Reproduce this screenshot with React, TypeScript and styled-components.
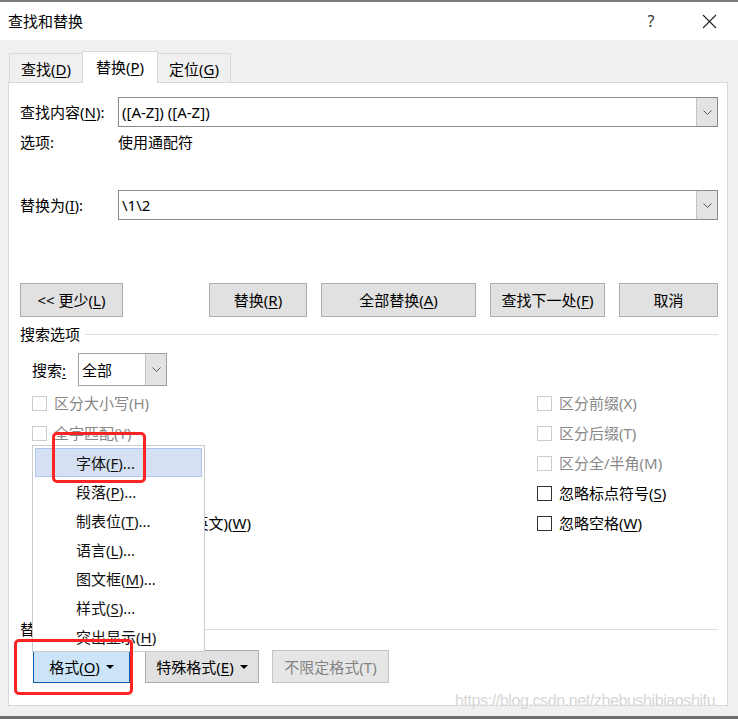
import React from 'react';
import styled, { createGlobalStyle } from 'styled-components';

const GlobalStyle = createGlobalStyle`
  html, body {
    margin: 0;
    padding: 0;
    background: #f0f0f0;
  }
  * {
    box-sizing: border-box;
  }
`;

const FONT = `"Noto Sans", "Noto Sans CJK SC", sans-serif`;

const Window = styled.div`
  position: relative;
  width: 738px;
  height: 719px;
  display: flex;
  flex-direction: column;
  background-color: #f0f0f0;
  border-top: 2px solid #7b7b7b;
  border-bottom: 3px solid #6e6e6e;
  font-family: ${FONT};
  font-size: 15px;
  color: #000;
  overflow: hidden;
`;

const TitleBar = styled.div`
  height: 38px;
  display: flex;
  align-items: center;
  background-color: #fff;
  padding-left: 8px;
`;

const Title = styled.div`
  flex: 1;
  font-size: 15px;
  line-height: 20px;
`;

const TitleButton = styled.div`
  width: 58px;
  height: 38px;
  display: flex;
  align-items: center;
  justify-content: center;
  color: #333;
  font-size: 16px;
`;

const Body = styled.div`
  flex: 1;
  display: flex;
  flex-direction: column;
  padding: 11px 10px 10px 8px;
`;

const TabStrip = styled.div`
  display: flex;
  align-items: flex-end;
  padding-left: 1px;
  margin-bottom: -1px;
  position: relative;
  z-index: 1;
`;

const Tab = styled.div<{ $active?: boolean }>`
  height: ${p => (p.$active ? '32px' : '30px')};
  padding: 0 ${p => (p.$active ? '13px' : '11px')};
  display: flex;
  align-items: center;
  background-color: ${p => (p.$active ? '#fff' : '#f0f0f0')};
  border: 1px solid #d9d9d9;
  border-bottom: ${p => (p.$active ? '1px solid #fff' : '1px solid #d9d9d9')};
  margin-right: -1px;
  line-height: 18px;
  padding-top: ${p => (p.$active ? '0' : '2px')};
`;

const Panel = styled.div`
  flex: 1;
  display: flex;
  flex-direction: column;
  background-color: #fff;
  border: 1px solid #d9d9d9;
  padding: 14px 9px 0 11px;
`;

const FieldRow = styled.div<{ $gap?: number }>`
  display: flex;
  align-items: center;
  height: 30px;
  margin-top: ${p => p.$gap ?? 0}px;
`;

const FieldLabel = styled.div`
  width: 98px;
  line-height: 18px;
`;

const Combo = styled.div`
  flex: 1;
  height: 30px;
  display: flex;
  border: 1px solid #8a8a8a;
  background: #fff;
`;

const ComboText = styled.div`
  flex: 1;
  display: flex;
  align-items: center;
  padding-left: 3px;
  font-size: 15px;
  line-height: 18px;
`;

const ComboArrow = styled.div<{ $w?: number }>`
  width: ${p => p.$w ?? 21}px;
  display: flex;
  align-items: center;
  justify-content: center;
  background-color: #e3e3e3;
  border-left: 1px solid #c4c4c4;
`;

const InfoRow = styled.div`
  display: flex;
  align-items: center;
  height: 30px;
  line-height: 18px;
`;

const ButtonRow = styled.div<{ $gap: number; $indent?: number }>`
  display: flex;
  align-items: center;
  margin-top: ${p => p.$gap}px;
  padding-left: ${p => p.$indent ?? 0}px;
`;

const PushButton = styled.div<{ $w: number; $h?: number; $ml?: number; $state?: 'normal' | 'focus' | 'disabled' }>`
  width: ${p => p.$w}px;
  height: ${p => p.$h ?? 34}px;
  margin-left: ${p => (p.$ml === undefined ? '0' : p.$ml < 0 ? 'auto' : `${p.$ml}px`)};
  display: flex;
  align-items: center;
  justify-content: center;
  gap: 6px;
  line-height: 18px;
  white-space: pre;
  background-color: ${p =>
    p.$state === 'focus' ? '#cce4f7' : p.$state === 'disabled' ? '#e6e6e6' : '#e1e1e1'};
  border: 1px solid
    ${p => (p.$state === 'focus' ? '#0a5fa8' : p.$state === 'disabled' ? '#c4c4c4' : '#adadad')};
  color: ${p => (p.$state === 'disabled' ? '#838383' : '#000')};
`;

const GroupHeader = styled.div<{ $gap: number }>`
  display: flex;
  align-items: center;
  gap: 5px;
  height: 18px;
  margin-top: ${p => p.$gap}px;
  line-height: 18px;

  &::after {
    content: '';
    flex: 1;
    height: 1px;
    background-color: #dcdcdc;
  }
`;

const SearchRow = styled.div`
  display: flex;
  align-items: center;
  height: 33px;
  margin-top: 10px;
  padding-left: 12px;
`;

const SearchLabel = styled.div`
  width: 46px;
  line-height: 18px;
`;

const SmallCombo = styled.div`
  width: 89px;
  height: 33px;
  display: flex;
  border: 1px solid #a0a0a0;
`;

const CheckGrid = styled.div`
  display: grid;
  grid-template-columns: 505px 1fr;
  grid-auto-rows: 30px;
  margin-top: 2px;
  padding-left: 12px;
`;

const CheckItem = styled.div<{ $disabled?: boolean }>`
  display: flex;
  align-items: center;
  gap: 7px;
  line-height: 18px;
  white-space: nowrap;
  color: ${p => (p.$disabled ? '#888' : '#000')};
`;

const Box = styled.div<{ $disabled?: boolean }>`
  width: 15px;
  height: 15px;
  border: 1px solid ${p => (p.$disabled ? '#cccccc' : '#333')};
  background: #fff;
  display: flex;
  align-items: center;
  justify-content: center;
`;

const Key = styled.span`
  text-decoration: underline;
  text-underline-offset: 2px;
  text-decoration-thickness: 1px;
`;

const Caret = styled.span`
  width: 0;
  height: 0;
  border-left: 4px solid transparent;
  border-right: 4px solid transparent;
  border-top: 4px solid #000;
`;

const Menu = styled.div`
  position: absolute;
  left: 32px;
  top: 443px;
  width: 173px;
  height: 207px;
  background: #fff;
  border: 1px solid #cccccc;
  padding: 2px 2px 0;
  z-index: 5;
`;

const MenuItem = styled.div<{ $hot?: boolean }>`
  height: 29px;
  display: flex;
  align-items: center;
  padding-left: 40px;
  line-height: 18px;
  color: #111;
  background-color: ${p => (p.$hot ? '#d5e1f2' : 'transparent')};
  border: 1px solid ${p => (p.$hot ? '#aec4e8' : 'transparent')};
`;

const Annotation = styled.div`
  position: absolute;
  border: 3px solid #ff2424;
  border-radius: 5px;
  z-index: 6;
`;

const Watermark = styled.div`
  position: absolute;
  left: 455px;
  top: 690px;
  font-family: "Liberation Sans", Arial, sans-serif;
  font-size: 16px;
  letter-spacing: -0.4px;
  white-space: nowrap;
  color: #d6d6d6;
  text-shadow: 0 0 1px #fff;
  z-index: 7;
`;

const Chevron = () => (
  <svg width="9" height="5" viewBox="0 0 9 5">
    <polyline points="0.5,0.5 4.5,4.5 8.5,0.5" fill="none" stroke="#555" strokeWidth="1" />
  </svg>
);

const CloseIcon = () => (
  <svg width="15" height="15" viewBox="0 0 15 15">
    <path d="M1 1 L14 14 M14 1 L1 14" stroke="#222" strokeWidth="1.1" />
  </svg>
);

const leftChecks = [
  { label: '区分大小写(H)', disabled: true },
  { label: '全字匹配(Y)', disabled: true },
  { label: '使用通配符', key: 'U', disabled: false, checked: true },
  { label: '同音(英文)(K)', disabled: true },
  { label: '查找单词的所有形式(英文)', key: 'W', disabled: false },
];

const rightChecks = [
  { label: '区分前缀(X)', disabled: true },
  { label: '区分后缀(T)', disabled: true },
  { label: '区分全/半角(M)', disabled: true },
  { label: '忽略标点符号', key: 'S', disabled: false },
  { label: '忽略空格', key: 'W', disabled: false },
];

const menuItems = [
  { label: '字体', key: 'F', more: true },
  { label: '段落', key: 'P', more: true },
  { label: '制表位', key: 'T', more: true },
  { label: '语言', key: 'L', more: true },
  { label: '图文框', key: 'M', more: true },
  { label: '样式', key: 'S', more: true },
  { label: '突出显示', key: 'H', more: false },
];

type Check = { label: string; key?: string; disabled: boolean; checked?: boolean };

const CheckRow: React.FC<{ item: Check }> = ({ item }) => (
  <CheckItem $disabled={item.disabled}>
    <Box $disabled={item.disabled}>
      {item.checked && (
        <svg width="11" height="9" viewBox="0 0 11 9">
          <polyline points="1,4.5 4,7.5 10,1" fill="none" stroke="#222" strokeWidth="1.4" />
        </svg>
      )}
    </Box>
    <span>
      {item.label}
      {item.key && (
        <>
          (<Key>{item.key}</Key>)
        </>
      )}
    </span>
  </CheckItem>
);

export default function App() {
  return (
    <>
      <GlobalStyle />
      <Window>
        <TitleBar>
          <Title>查找和替换</Title>
          <TitleButton>?</TitleButton>
          <TitleButton>
            <CloseIcon />
          </TitleButton>
        </TitleBar>

        <Body>
          <TabStrip>
            <Tab>
              查找(<Key>D</Key>)
            </Tab>
            <Tab $active>
              替换(<Key>P</Key>)
            </Tab>
            <Tab>
              定位(<Key>G</Key>)
            </Tab>
          </TabStrip>

          <Panel>
            <FieldRow>
              <FieldLabel>
                查找内容(<Key>N</Key>):
              </FieldLabel>
              <Combo>
                <ComboText>([A-Z]) ([A-Z])</ComboText>
                <ComboArrow>
                  <Chevron />
                </ComboArrow>
              </Combo>
            </FieldRow>

            <InfoRow>
              <FieldLabel>选项:</FieldLabel>
              <span>使用通配符</span>
            </InfoRow>

            <FieldRow $gap={33}>
              <FieldLabel>
                替换为(<Key>I</Key>):
              </FieldLabel>
              <Combo>
                <ComboText>\1\2</ComboText>
                <ComboArrow>
                  <Chevron />
                </ComboArrow>
              </Combo>
            </FieldRow>

            <ButtonRow $gap={63}>
              <PushButton $w={103}>
                <span>
                  &lt;&lt; 更少(<Key>L</Key>)
                </span>
              </PushButton>
              <PushButton $w={98} $ml={-1}>
                <span>
                  替换(<Key>R</Key>)
                </span>
              </PushButton>
              <PushButton $w={155} $ml={14}>
                <span>
                  全部替换(<Key>A</Key>)
                </span>
              </PushButton>
              <PushButton $w={115} $ml={14}>
                <span>
                  查找下一处(<Key>F</Key>)
                </span>
              </PushButton>
              <PushButton $w={99} $ml={14}>
                取消
              </PushButton>
            </ButtonRow>

            <GroupHeader $gap={8}>搜索选项</GroupHeader>

            <SearchRow>
              <SearchLabel>
                搜索<Key>:</Key>
              </SearchLabel>
              <SmallCombo>
                <ComboText>全部</ComboText>
                <ComboArrow $w={21}>
                  <Chevron />
                </ComboArrow>
              </SmallCombo>
            </SearchRow>

            <CheckGrid>
              {leftChecks.map((l, i) => (
                <React.Fragment key={l.label}>
                  <CheckRow item={l} />
                  <CheckRow item={rightChecks[i]} />
                </React.Fragment>
              ))}
            </CheckGrid>

            <GroupHeader $gap={82}>替换</GroupHeader>

            <ButtonRow $gap={12} $indent={13}>
              <PushButton $w={97} $h={33} $state="focus">
                <span>
                  格式(<Key>O</Key>)
                </span>
                <Caret />
              </PushButton>
              <PushButton $w={114} $h={33} $ml={15}>
                <span>
                  特殊格式(<Key>E</Key>)
                </span>
                <Caret />
              </PushButton>
              <PushButton $w={117} $h={33} $ml={13} $state="disabled">
                不限定格式(T)
              </PushButton>
            </ButtonRow>
          </Panel>
        </Body>

        <Menu>
          {menuItems.map((m, i) => (
            <MenuItem key={m.label} $hot={i === 0}>
              {m.label}(<Key>{m.key}</Key>){m.more ? '...' : ''}
            </MenuItem>
          ))}
        </Menu>

        <Annotation style={{ left: 52, top: 430, width: 94, height: 51 }} />
        <Annotation style={{ left: 14, top: 637, width: 119, height: 56 }} />

        <Watermark>https://blog.csdn.net/zhebushibiaoshifu</Watermark>
      </Window>
    </>
  );
}
